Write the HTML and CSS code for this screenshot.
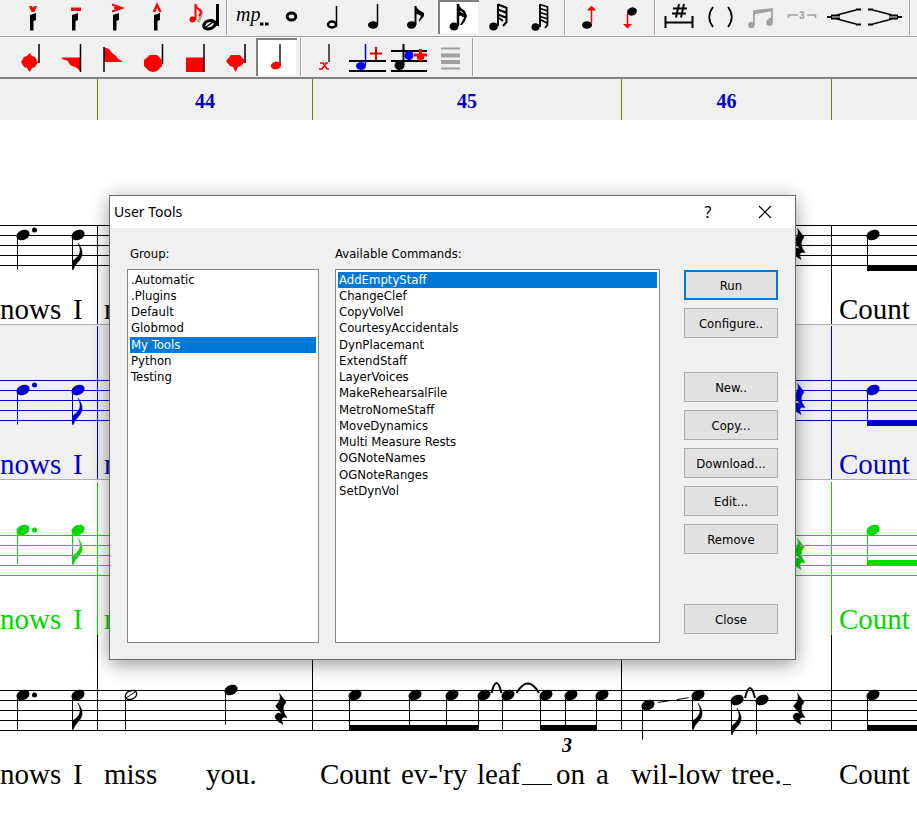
FILE: index.html
```
<!DOCTYPE html>
<html lang="en">
<head>
  <meta charset="UTF-8" />
  <meta name="viewport" content="width=device-width, initial-scale=1.0" />
  <title>User Tools</title>
  <link rel="stylesheet" href="styles.css">
</head>
<body>
  <!-- Shared music symbols, origin is the middle of the note head -->
  <svg class="defs" width="0" height="0" aria-hidden="true">
    <defs>
      <symbol id="head" overflow="visible">
        <ellipse rx="6.8" ry="5" transform="rotate(-24)" fill="currentColor"/>
      </symbol>
      <symbol id="quarter" overflow="visible">
        <use href="#head"/>
        <path d="M-5.5 1V34.5" stroke="currentColor" fill="none"/>
      </symbol>
      <symbol id="eighth" overflow="visible">
        <use href="#quarter"/>
        <path d="M0 8C6 16 5 22 0 27Q-4 31 -5 35L-5.5 26C0 22 5 18 0 8Z" fill="currentColor" stroke="currentColor" stroke-width=".5"/>
      </symbol>
      <symbol id="half" overflow="visible">
        <ellipse rx="6" ry="4.2" transform="rotate(-24)" fill="none" stroke="currentColor" stroke-width="1.4"/>
        <path d="M-5 3L4-3" stroke="currentColor" stroke-width="1"/>
        <path d="M-5.5 1V34.5" stroke="currentColor" fill="none"/>
      </symbol>
      <symbol id="rest" overflow="visible">
        <path d="M-1.5-15.500L5-7Q-1 0 6 8.500Q-2 7 2 15.500Q-8 10 -5.500 6Q-3 2.500 1.500 5.500L-5.500-3Q1-9 -1.500-15.500Z" fill="currentColor" stroke="currentColor" stroke-width=".5"/>
      </symbol>
      <symbol id="stub" overflow="visible">
        <path d="M0 15L6 13V20L3.5 21V30.500H0Z" fill="#000"/>
      </symbol>
    </defs>
  </svg>

  <div class="app">
    <!-- Toolbars -->
    <div class="toolbar">
      <button aria-label="Staccatissimo"><svg width="41" height="36"><use href="#stub" x="18" y="0"/><path d="M17 6H20L21 8L22 6H25L22.500 12H19.500Z" fill="red"/></svg></button>
      <button aria-label="Tenuto"><svg width="41" height="36"><use href="#stub" x="19" y="0"/><path d="M18 7.500H28V11H18Z" fill="red"/></svg></button>
      <button aria-label="Accent"><svg width="41" height="36"><use href="#stub" x="19" y="0"/><path d="M18 4.500L28 8L18 11.500M20 8H29" fill="none" stroke="red" stroke-width="2"/></svg></button>
      <button aria-label="Marcato"><svg width="41" height="36"><use href="#stub" x="19" y="0"/><path d="M19 12L22 5L25.500 12" fill="none" stroke="red" stroke-width="2.500"/></svg></button>
      <button class="grace" aria-label="Grace note"><svg width="47" height="36"><path d="M23 9Q28 13 22 22" fill="none" stroke="#aaa" stroke-width="3"/><circle cx="16.500" cy="19.500" r="3" fill="red"/><path d="M19.500 20V4Q20 8 24 10Q26 13 23 16" fill="none" stroke="red" stroke-width="2"/><ellipse cx="33.500" cy="24.700" rx="6" ry="4" transform="rotate(-20 33.500 24.700)" fill="none" stroke="#000" stroke-width="3"/><path d="M30 27L37 22" stroke="#000" stroke-width="1.500"/><path d="M41.500 4V26" stroke="#000" stroke-width="3"/></svg></button>
      <span class="sep"></span>
      <button class="dynamic" aria-label="Dynamic"><svg width="43" height="36"><text class="mp" x="5" y="21">mp</text><path d="M29 22.500H32.500V25.500H29ZM34 22.500H37.500V25.500H34Z"/></svg></button>
      <button aria-label="Whole note"><svg width="41" height="36"><ellipse cx="17.500" cy="16.500" rx="4.300" ry="3.500" fill="none" stroke="#000" stroke-width="3"/></svg></button>
      <button aria-label="Half note"><svg width="41" height="36"><ellipse cx="17" cy="24.500" rx="4" ry="3" fill="none" stroke="#000" stroke-width="2.500"/><path d="M21.500 6V27" stroke="#000" stroke-width="1.500"/></svg></button>
      <button aria-label="Quarter note"><svg width="41" height="36"><ellipse cx="17" cy="25" rx="5" ry="3.800"/><path d="M21.500 4V25" stroke="#000" stroke-width="1.500"/></svg></button>
      <button aria-label="Eighth note"><svg width="41" height="36"><ellipse cx="14.500" cy="25" rx="4.500" ry="3.800"/><path d="M18.500 6V25" stroke="#000" stroke-width="2"/><path d="M18 6L22 10L27 13V16L22 22V20L24 16L18 13Z"/></svg></button>
      <button class="pressed" aria-label="Sixteenth note"><svg width="41" height="36"><ellipse cx="16" cy="26.500" rx="4.500" ry="4"/><path d="M20 4V26" stroke="#000" stroke-width="2.500"/><path d="M20 4L23 8L27 11L29 16L27 21L24 25H22L26 18L20 15Z"/><path d="M22 11L25 13M22 16L26 18" stroke="#fff" stroke-width="1"/></svg></button>
      <button aria-label="Thirty-second note"><svg width="41" height="36"><ellipse cx="14.500" cy="26.500" rx="4.200" ry="4"/><path d="M19 4V26" stroke="#000" stroke-width="2"/><path d="M19 4.500L28 8M19 9.500L28 13M19 14.500L28 18M27.500 7V22L24 26M20 18L24 21" fill="none" stroke="#000" stroke-width="2"/></svg></button>
      <button aria-label="Sixty-fourth note"><svg width="41" height="36"><ellipse cx="15.500" cy="27" rx="4" ry="3.800"/><path d="M20 4V27" stroke="#000" stroke-width="2"/><path d="M20 4.500L28 7M20 8.500L28 11M20 12.500L28 15M20 16.500L28 19M27.500 6V25L25 28M21 20L27 23" fill="none" stroke="#000" stroke-width="1.700"/></svg></button>
      <span class="sep"></span>
      <button aria-label="Stem up"><svg width="41" height="36"><ellipse cx="18" cy="25" rx="5" ry="3.800"/><path d="M22.500 23V8" stroke="red" stroke-width="1.500"/><path d="M18 10.500L20 8L22.500 6L25 8L27 10.500Z" fill="red"/></svg></button>
      <button aria-label="Stem down"><svg width="41" height="36"><ellipse cx="22" cy="11.500" rx="5" ry="4" transform="rotate(-20 22 11.500)"/><path d="M17.500 14V26" stroke="red" stroke-width="1.500"/><path d="M13 24H22L20 26L17.500 28.500L15 26Z" fill="red"/></svg></button>
      <span class="sep"></span>
      <button aria-label="Accidental spacing"><svg width="41" height="36"><path d="M20 4L17 17.500M25 4L22 17.500M14 8.500H28M13 13.500H27" stroke="#000" stroke-width="2"/><path d="M6.500 16V28M33.500 16V28M6 22.500H34" stroke="#000" stroke-width="2"/></svg></button>
      <button aria-label="Parentheses"><svg width="41" height="36"><path d="M13 7Q5.500 17 13 27M28 7Q35.500 17 28 27" fill="none" stroke="#000" stroke-width="1.700"/></svg></button>
      <button aria-label="Beam" disabled><svg width="41" height="36"><circle cx="10.500" cy="25" r="3.200" fill="#a0a0a0"/><circle cx="28.500" cy="22.500" r="3.200" fill="#a0a0a0"/><path d="M13 25V11L31 9V23" fill="none" stroke="#a0a0a0" stroke-width="1.700"/><path d="M13 13L31 10M29 18V26" stroke="#a0a0a0" stroke-width="2.500"/></svg></button>
      <button aria-label="Triplet" disabled><svg width="41" height="36"><path d="M6.500 18V15H16M25 15H33.500V18" fill="none" stroke="#a0a0a0" stroke-width="1.700"/><text class="triplet-icon" x="17" y="19">3</text></svg></button>
      <button class="hairpins" aria-label="Hairpins"><svg width="83" height="36"><path d="M33 10L14 15M33 24L14 19M50 10L69 15M50 24L69 19" fill="none" stroke="#000" stroke-width="1.300"/><path d="M33 9.500H38M33 24.500H38M4 17H9M8 15.500H17M8 18.500H17M45 9.500H50M45 24.500H50M74 17H79M66 15.500H75M66 18.500H75" stroke="#000" stroke-width="2"/></svg></button>
      <span class="sep"></span>
      <button aria-label="More"><svg width="41" height="36"><path d="M4 20H6M3 29H7" stroke="#000" stroke-width="3"/></svg></button>
    </div>
    <div class="toolbar second">
      <button aria-label="Diamond head"><svg width="41" height="38"><path d="M29 6V25" stroke="#000" stroke-width="1.500"/><path d="M19.500 15L22 18L25 19L28 24L25 29L22 30L19.500 34L17 30L14 29L11 24L14 19L17 18Z" fill="red"/></svg></button>
      <button aria-label="Left triangle head"><svg width="41" height="38"><path d="M11 19.500H30V34L26 30L19 27L17 23L11 21Z" fill="red"/><path d="M29.500 6V34" stroke="#000" stroke-width="1.500"/></svg></button>
      <button aria-label="Right triangle head"><svg width="41" height="38"><path d="M12 9.500L17 11L20 15L24 18L26 21L30 23V24H12Z" fill="red"/><path d="M12 9V34" stroke="#000" stroke-width="1.500"/></svg></button>
      <button aria-label="Round head"><svg width="41" height="38"><path d="M29.500 6V26" stroke="#000" stroke-width="1.500"/><path d="M17 17H24L29 22V28L24 33L20 34L16 33L11 28V22Z" fill="red"/></svg></button>
      <button aria-label="Square head"><svg width="41" height="38"><path d="M12 19.500H30V34H12Z" fill="red"/><path d="M30 6V34" stroke="#000" stroke-width="1.500"/></svg></button>
      <button aria-label="Pointed head"><svg width="41" height="38"><path d="M30 6V25" stroke="#000" stroke-width="1.500"/><path d="M16 17H25L30 23L26 28L23 29L20.500 34L18 29L15 28L11 23Z" fill="red"/></svg></button>
      <button class="pressed" aria-label="Normal head"><svg width="41" height="38"><path d="M24 6V27" stroke="#000" stroke-width="1.300"/><ellipse cx="20" cy="27.500" rx="5.300" ry="3.800" transform="rotate(-15 20 27.500)" fill="red"/></svg></button>
      <span class="sep"></span>
      <button aria-label="X head"><svg width="41" height="38"><path d="M24 6V24" stroke="#000" stroke-width="1.300"/><path d="M15 25H18L22 31H24M23 25H21L17 31H14" fill="none" stroke="red" stroke-width="1.700"/></svg></button>
      <button aria-label="Add note"><svg width="41" height="38"><path d="M3 23H40M3 33H40" stroke="#000" stroke-width="2"/><path d="M19.500 6V27" stroke="#00f" stroke-width="1.500"/><ellipse cx="15" cy="28" rx="5" ry="4" fill="#00f"/><path d="M24 15.500H36M30 9V22" stroke="#e00000" stroke-width="2"/></svg></button>
      <button aria-label="Add chord note"><svg width="41" height="38"><path d="M4 13H40M4 23H40M4 33H40" stroke="#000" stroke-width="2"/><path d="M16.500 6V27" stroke="#000" stroke-width="2"/><ellipse cx="12.500" cy="27.500" rx="5" ry="4.500"/><circle cx="22" cy="17.500" r="4.500" fill="#00f"/><path d="M27 17H40M33.500 11V23M30 20H37" stroke="red" stroke-width="3"/></svg></button>
      <button aria-label="Staff lines" disabled><svg width="41" height="38"><path d="M13 10.500H32M13 30.500H32" stroke="#a0a0a0" stroke-width="2"/><path d="M13 17.500H32M13 24H32" stroke="#a0a0a0" stroke-width="4"/></svg></button>
      <span class="sep"></span>
    </div>

    <!-- Measure ruler -->
    <div class="ruler">
      <span class="bar lead"></span>
      <span class="bar m44">44</span>
      <span class="bar m45">45</span>
      <span class="bar m46">46</span>
    </div>

    <!-- Score -->
    <div class="score">
      <svg class="staff" width="100%" height="155">
        <g class="lines">
          <line x2="100%" y1="55.500" y2="55.500"/><line x2="100%" y1="65.500" y2="65.500"/><line x2="100%" y1="75.500" y2="75.500"/><line x2="100%" y1="85.500" y2="85.500"/><line x2="100%" y1="95.500" y2="95.500"/>
          <path d="M97.500 55V154M831.500 55V154"/>
        </g>
        <use href="#quarter" x="23" y="65"/><circle cx="34.500" cy="60" r="2.500"/>
        <use href="#eighth" x="78" y="65"/>
        <use href="#rest" x="799" y="74"/>
        <use href="#quarter" x="873" y="65"/><rect x="867" y="95" width="100%" height="6"/>
        <text x="0" y="149">nows</text><text x="73" y="149">I</text><text x="104" y="149">miss</text><text x="839" y="149">Count</text>
      </svg>
      <svg class="staff blue" width="100%" height="155">
        <g class="lines">
          <line x2="100%" y1="55.500" y2="55.500"/><line x2="100%" y1="65.500" y2="65.500"/><line x2="100%" y1="75.500" y2="75.500"/><line x2="100%" y1="85.500" y2="85.500"/><line x2="100%" y1="95.500" y2="95.500"/>
          <path d="M97.500 1V154M831.500 1V154"/>
        </g>
        <use href="#quarter" x="23" y="65"/><circle cx="34.500" cy="60" r="2.500"/>
        <use href="#eighth" x="78" y="65"/>
        <use href="#rest" x="799" y="74"/>
        <use href="#quarter" x="873" y="65"/><rect x="867" y="95" width="100%" height="6"/>
        <text x="0" y="149">nows</text><text x="73" y="149">I</text><text x="104" y="149">miss</text><text x="839" y="149">Count</text>
      </svg>
      <svg class="staff green" width="100%" height="155">
        <g class="lines">
          <line x2="100%" y1="55.500" y2="55.500"/><line x2="100%" y1="65.500" y2="65.500"/><line x2="100%" y1="75.500" y2="75.500"/><line x2="100%" y1="85.500" y2="85.500"/><line x2="100%" y1="95.500" y2="95.500"/>
          <path d="M97.500 2V155M831.500 2V155"/>
        </g>
        <use href="#quarter" x="23" y="50"/><circle cx="34.500" cy="50" r="2.500"/>
        <use href="#eighth" x="78" y="50"/>
        <use href="#rest" x="799" y="74"/>
        <use href="#quarter" x="873" y="50"/><rect x="867" y="80" width="100%" height="6"/>
        <text x="0" y="149">nows</text><text x="73" y="149">I</text><text x="104" y="149">miss</text><text x="839" y="149">Count</text>
      </svg>
      <svg class="staff last" width="100%" height="178">
        <g class="lines">
          <line x2="100%" y1="55.500" y2="55.500"/><line x2="100%" y1="65.500" y2="65.500"/><line x2="100%" y1="75.500" y2="75.500"/><line x2="100%" y1="85.500" y2="85.500"/><line x2="100%" y1="95.500" y2="95.500"/>
          <path d="M97.500 0V95M312.500 0V95M621.500 0V95M831.500 0V95"/>
        </g>
        <use href="#quarter" x="23" y="60"/><circle cx="34.500" cy="60" r="2.500"/>
        <use href="#eighth" x="78" y="60"/>
        <!-- 44 -->
        <use href="#half" x="131" y="60"/>
        <use href="#quarter" x="231" y="55"/>
        <use href="#rest" x="281" y="74"/>
        <!-- 45 -->
        <use href="#quarter" x="355" y="60"/><use href="#quarter" x="415" y="60"/><use href="#quarter" x="452" y="60"/><use href="#quarter" x="484" y="60"/>
        <rect x="349" y="90" width="129" height="6"/>
        <path class="tie" d="M491.500 58Q496.500 38 501.500 58"/>
        <use href="#quarter" x="508" y="60"/>
        <path class="tie" d="M516.500 58Q528 39 539 58"/>
        <use href="#quarter" x="546" y="60"/><use href="#quarter" x="571" y="60"/><use href="#quarter" x="602" y="60"/>
        <rect x="540" y="90" width="57" height="6"/>
        <text class="triplet" x="562" y="117">3</text>
        <!-- 46 -->
        <use href="#quarter" x="648" y="70"/>
        <path class="slide" d="M658 67.500L690 62.500"/>
        <use href="#eighth" x="698" y="60"/>
        <use href="#eighth" x="737" y="65"/>
        <path class="tie" d="M745 63Q750 43 755 63"/>
        <use href="#quarter" x="762" y="65"/>
        <use href="#rest" x="799" y="74"/>
        <use href="#quarter" x="873" y="60"/><rect x="867" y="90" width="100%" height="6"/>
        <g>
          <text x="0" y="149">nows</text><text x="73" y="149">I</text><text x="104" y="149">miss</text><text x="206" y="149">you.</text>
          <text x="320" y="149">Count</text><text x="401" y="149">ev-'ry</text><text x="477" y="149">leaf</text><text x="556" y="149">on</text><text x="596" y="149">a</text>
          <text x="631" y="149">wil-low</text><text x="731" y="149">tree.</text><text x="839" y="149">Count</text>
        </g>
        <path class="lines" d="M522 149.500H552M783 149.500H791"/>
      </svg>
    </div>

    <!-- User Tools window -->
    <div class="dialog" role="dialog" aria-labelledby="dialogTitle">
      <div class="titlebar">
        <span class="title" id="dialogTitle">User Tools</span>
        <button aria-label="Help" class="help">?</button>
        <button aria-label="Close window"><svg width="14" height="14"><path d="M1 1L13 13M13 1L1 13" stroke="#000" stroke-width="1.200"/></svg></button>
      </div>
      <div class="dialog-body">
        <div class="field group">
          <label for="group">Group:</label>
          <select id="group" size="7">
            <option>.Automatic</option>
            <option>.Plugins</option>
            <option>Default</option>
            <option>Globmod</option>
            <option selected>My Tools</option>
            <option>Python</option>
            <option>Testing</option>
          </select>
        </div>
        <div class="field">
          <label for="commands">Available Commands:</label>
          <select id="commands" size="14">
            <option selected>AddEmptyStaff</option>
            <option>ChangeClef</option>
            <option>CopyVolVel</option>
            <option>CourtesyAccidentals</option>
            <option>DynPlacemant</option>
            <option>ExtendStaff</option>
            <option>LayerVoices</option>
            <option>MakeRehearsalFile</option>
            <option>MetroNomeStaff</option>
            <option>MoveDynamics</option>
            <option>Multi Measure Rests</option>
            <option>OGNoteNames</option>
            <option>OGNoteRanges</option>
            <option>SetDynVol</option>
          </select>
        </div>
        <div class="actions">
          <button class="default">Run</button>
          <button>Configure..</button>
          <button class="edit-start">New..</button>
          <button>Copy...</button>
          <button>Download...</button>
          <button>Edit...</button>
          <button>Remove</button>
          <button class="close">Close</button>
        </div>
      </div>
    </div>
  </div>
</body>
</html>
```
FILE: styles.css
```
* {
  box-sizing: border-box;
  margin: 0;
  padding: 0;
}

html, body {
  height: 100%;
  overflow: hidden;
  background: #fff;
  color: #000;
  font-family: "DejaVu Sans Condensed", "Noto Sans", sans-serif;
  font-size: 13px;
}

.defs {
  position: absolute;
}

.app {
  display: flex;
  flex-direction: column;
  height: 100vh;
}

svg {
  display: block;
}

/* Toolbars */
.toolbar {
  display: flex;
  flex: none;
  height: 38px;
  padding-left: 12px;
  background: #f0f0f0;
  border-bottom: 1px solid #fff;
  box-shadow: inset 0 -1px 0 #a0a0a0;
  overflow: hidden;
}

.toolbar.second {
  height: 41px;
  padding-left: 10px;
  border-bottom: 2px solid #808080;
  box-shadow: none;
}

.toolbar button {
  flex: none;
  width: 41px;
  height: 36px;
  border: none;
  background: none;
}

.toolbar svg {
  overflow: visible;
}

.toolbar .grace {
  width: 47px;
}

.toolbar .dynamic {
  width: 43px;
}

.toolbar .hairpins {
  width: 83px;
}

.toolbar.second button {
  height: 38px;
}

.toolbar .pressed {
  background: #fff;
  box-shadow: inset 2px 2px 0 #808080, inset -1px -1px 0 #f0f0f0;
}

.toolbar:not(.second) .pressed {
  height: 34px;
}

.sep {
  flex: none;
  width: 2px;
  height: 35px;
  margin: 0 3px;
  background: #a0a0a0;
  border-right: 1px solid #fff;
}

.second .sep {
  height: 38px;
}

.mp {
  font: italic 20px "Liberation Serif", serif;
}

.triplet-icon {
  font: bold 10px "Liberation Sans", sans-serif;
  fill: #a0a0a0;
}

/* Ruler */
.ruler {
  display: flex;
  flex: none;
  height: 41px;
  background: #f0f0f0;
  color: #0000c0;
  font: bold 20px/44px "Liberation Serif", serif;
  text-align: center;
}

.bar {
  flex: none;
  border-right: 1px solid #808000;
}

.lead {
  width: 98px;
}

.m44 {
  width: 215px;
}

.m45 {
  width: 309px;
}

.m46 {
  width: 210px;
}

/* Score */
.score {
  flex: 1;
  padding-top: 50px;
  overflow: hidden;
}

.staff {
  color: #000;
  fill: currentColor;
  border-bottom: 1px solid #b0b0b0;
  font: 29px "Liberation Serif", serif;
}

.staff.blue {
  color: #0000c8;
  background: #f0f0f0;
}

.staff.green {
  color: #00d800;
  border: none;
}

.staff.last {
  border: none;
}

.lines {
  stroke: currentColor;
  stroke-width: 1px;
}

.tie {
  fill: none;
  stroke: #000;
  stroke-width: 2px;
}

.slide {
  stroke: #000;
  stroke-width: 1px;
  stroke-dasharray: 12 7;
}

.triplet {
  font: italic bold 20px "Liberation Serif", serif;
}

/* Dialog floats over the score */
.dialog {
  position: absolute;
  top: 195px;
  left: 109px;
  width: 687px;
  background: #f0f0f0;
  border: 1px solid #6a6a6a;
  box-shadow: 0 4px 18px rgba(0, 0, 0, 0.4);
}

.titlebar {
  display: flex;
  align-items: center;
  height: 32px;
  padding-left: 4px;
  background: #fff;
  font-family: "Noto Sans", sans-serif;
  font-size: 14px;
}

.title {
  flex: 1;
  padding-bottom: 2px;
}

.titlebar button {
  display: flex;
  align-items: center;
  justify-content: center;
  width: 60px;
  height: 32px;
  border: none;
  background: none;
  font: 16px "Noto Sans", sans-serif;
}

.titlebar .help {
  width: 54px;
}

.dialog-body {
  display: flex;
  padding: 17px 17px 16px;
}

.field {
  display: flex;
  flex: 1;
  flex-direction: column;
  margin-right: 24px;
}

.field.group {
  flex: none;
  width: 192px;
  margin-right: 16px;
}

.field label {
  height: 24px;
  line-height: 17px;
}

.group label {
  padding-left: 3px;
}

.field select {
  height: 374px;
  padding: 2px;
  border: 1px solid #828790;
  border-radius: 0;
  background: #fff;
  font: inherit;
  outline: none;
  overflow: hidden;
}

.field option {
  height: 16px;
  min-height: 16px;
  padding: 0 1px;
  line-height: 18px;
  color: #000;
}

.field option:nth-child(4n) {
  height: 17px;
}

.field option:checked {
  background: #0078d7 linear-gradient(#0078d7, #0078d7);
  color: #fff;
}

.actions {
  display: flex;
  flex-direction: column;
  gap: 8px;
  width: 94px;
  padding-top: 25px;
}

.actions button {
  height: 30px;
  border: 1px solid #adadad;
  background: #e1e1e1;
  color: #000;
  font: inherit;
}

.actions .default {
  border: 2px solid #0078d7;
}

.actions .edit-start {
  margin-top: 26px;
}

.actions .close {
  margin-top: 42px;
}
```
